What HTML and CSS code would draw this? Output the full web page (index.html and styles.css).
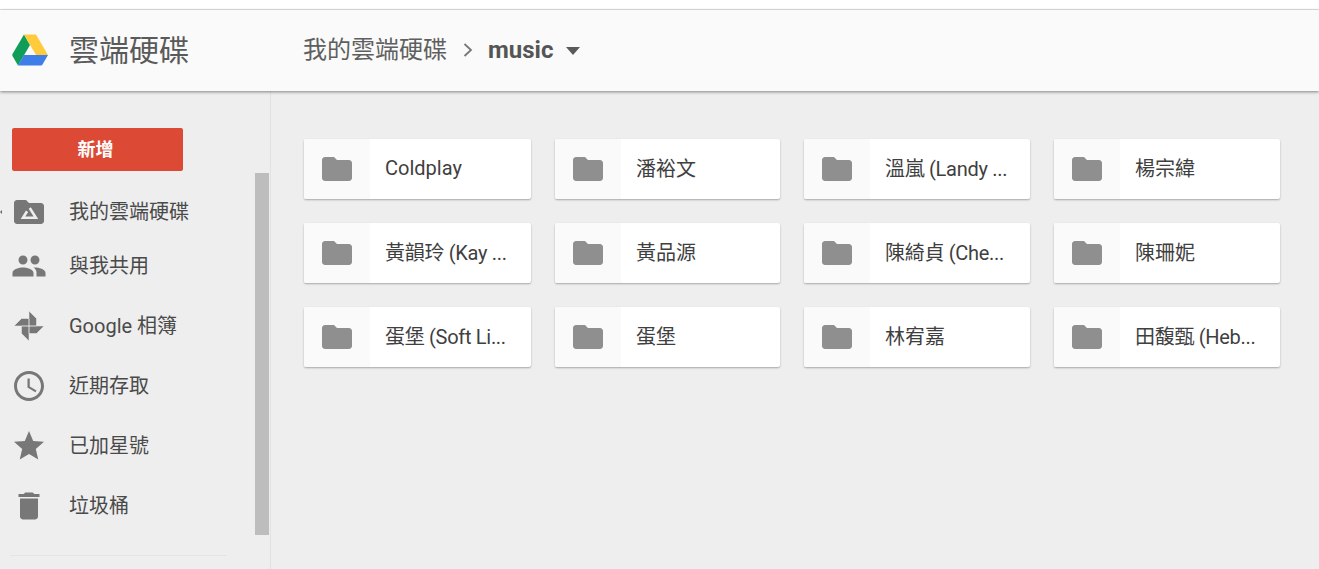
FILE: index.html
```html
<!DOCTYPE html>
<html lang="zh-Hant">
<head>
<meta charset="utf-8">
<title>雲端硬碟</title>
<link rel="stylesheet" href="styles.css">
</head>
<body>
<svg class="sprite" width="0" height="0" aria-hidden="true">
  <symbol id="folder" viewBox="0 0 24 24"><path d="M10 4H4c-1.100 0-2 .9-2 2v12c0 1.100.9 2 2 2h16c1.100 0 2-.9 2-2V8c0-1.100-.9-2-2-2h-8l-2-2z"/></symbol>
</svg>
<div class="topstrip"></div>
<header class="header">
  <div class="brand">
    <svg class="logo" viewBox="0 0 36 32" aria-hidden="true">
      <path fill="#0f9d58" d="M12 0.500 L0.500 20 Q0 21 0.500 22 L6 31.500 L18 11 Z"/>
      <path fill="#ffcb3d" d="M12 0.500 H24 L36 21 H24 Z"/>
      <path fill="#3f7ee8" d="M6 31.500 L12 21 H36 L30.500 30.500 Q30 31.500 29 31.500 Z"/>
    </svg>
    <span class="brand-name">雲端硬碟</span>
  </div>
  <nav class="crumbs">
    <span class="crumb">我的雲端硬碟</span>
    <svg class="crumb-sep" viewBox="0 0 12 16" aria-hidden="true"><path d="M2.500 2 L9 8 L2.500 14" fill="none" stroke="#777" stroke-width="1.800"/></svg>
    <span class="crumb-current">music</span>
    <span class="caret"></span>
  </nav>
</header>
<div class="body">
  <aside class="sidebar">
    <button class="new-btn">新增</button>
    <ul class="nav">
      <li class="nav-item nav-item-drive">
        <span class="tiny-arrow"></span>
        <svg class="nav-icon" viewBox="0 0 24 24" aria-hidden="true"><path d="M10 4H4c-1.100 0-2 .9-2 2v12c0 1.100.9 2 2 2h16c1.100 0 2-.9 2-2V8c0-1.100-.9-2-2-2h-8l-2-2z"/><path class="drive-mark" d="M12.500 9.300 L16.600 15.800 H8 L10.700 11.500"/></svg>
        <span class="nav-label">我的雲端硬碟</span>
      </li>
      <li class="nav-item nav-item-shared">
        <svg class="nav-icon" viewBox="0 0 24 24" aria-hidden="true"><path d="M16 11c1.660 0 2.990-1.340 2.990-3S17.660 5 16 5c-1.660 0-3 1.340-3 3s1.340 3 3 3zm-8 0c1.660 0 2.990-1.340 2.990-3S9.660 5 8 5C6.340 5 5 6.340 5 8s1.340 3 3 3zm0 2c-2.330 0-7 1.170-7 3.500V19h14v-2.500c0-2.330-4.670-3.500-7-3.500zm8 0c-.29 0-.62.020-.97.050 1.160.84 1.970 1.970 1.970 3.450V19h6v-2.500c0-2.330-4.670-3.500-7-3.500z"/></svg>
        <span class="nav-label">與我共用</span>
      </li>
      <li class="nav-item">
        <svg class="nav-icon" viewBox="0 0 24 24" aria-hidden="true"><path class="pinwheel" d="M12 12V2L17 7V12Z M12 12H22L17 17H12Z M12 12V22L7 17V12Z M12 12H2L7 7H12Z"/></svg>
        <span class="nav-label">Google 相簿</span>
      </li>
      <li class="nav-item">
        <svg class="nav-icon" viewBox="0 0 24 24" aria-hidden="true"><path d="M11.990 2C6.470 2 2 6.480 2 12s4.470 10 9.990 10C17.520 22 22 17.520 22 12S17.520 2 11.990 2zM12 20c-4.420 0-8-3.580-8-8s3.580-8 8-8 8 3.580 8 8-3.580 8-8 8zm.5-13H11v6l5.250 3.150.75-1.230-4.500-2.670z"/></svg>
        <span class="nav-label">近期存取</span>
      </li>
      <li class="nav-item">
        <svg class="nav-icon" viewBox="0 0 24 24" aria-hidden="true"><path d="M12 17.270L18.180 21l-1.640-7.030L22 9.240l-7.190-.61L12 2 9.190 8.630 2 9.240l5.460 4.730L5.820 21z"/></svg>
        <span class="nav-label">已加星號</span>
      </li>
      <li class="nav-item">
        <svg class="nav-icon" viewBox="0 0 24 24" aria-hidden="true"><path d="M6 19c0 1.100.9 2 2 2h8c1.100 0 2-.9 2-2V7H6v12zM19 4h-3.500l-1-1h-5l-1 1H5v2h14V4z"/></svg>
        <span class="nav-label">垃圾桶</span>
      </li>
    </ul>
    <div class="divider"></div>
    <div class="scroll-thumb"></div>
  </aside>
  <main class="main">
    <div class="grid">
      <div class="card"><div class="card-icon"><svg class="folder"><use href="#folder"/></svg></div><div class="card-name">Coldplay</div></div>
      <div class="card"><div class="card-icon"><svg class="folder"><use href="#folder"/></svg></div><div class="card-name">潘裕文</div></div>
      <div class="card"><div class="card-icon"><svg class="folder"><use href="#folder"/></svg></div><div class="card-name card-name-cut">溫嵐 (Landy ...</div></div>
      <div class="card"><div class="card-icon"><svg class="folder"><use href="#folder"/></svg></div><div class="card-name">楊宗緯</div></div>
      <div class="card"><div class="card-icon"><svg class="folder"><use href="#folder"/></svg></div><div class="card-name card-name-cut">黃韻玲 (Kay ...</div></div>
      <div class="card"><div class="card-icon"><svg class="folder"><use href="#folder"/></svg></div><div class="card-name">黃品源</div></div>
      <div class="card"><div class="card-icon"><svg class="folder"><use href="#folder"/></svg></div><div class="card-name card-name-cut">陳綺貞 (Che...</div></div>
      <div class="card"><div class="card-icon"><svg class="folder"><use href="#folder"/></svg></div><div class="card-name">陳珊妮</div></div>
      <div class="card"><div class="card-icon"><svg class="folder"><use href="#folder"/></svg></div><div class="card-name card-name-cut">蛋堡 (Soft Li...</div></div>
      <div class="card"><div class="card-icon"><svg class="folder"><use href="#folder"/></svg></div><div class="card-name">蛋堡</div></div>
      <div class="card"><div class="card-icon"><svg class="folder"><use href="#folder"/></svg></div><div class="card-name">林宥嘉</div></div>
      <div class="card"><div class="card-icon"><svg class="folder"><use href="#folder"/></svg></div><div class="card-name card-name-cut">田馥甄 (Heb...</div></div>
    </div>
  </main>
</div>
</body>
</html>
```
FILE: styles.css
```css
* { box-sizing: border-box; }
html, body { margin: 0; height: 569px; overflow: hidden; }
body {
  background: #eeeeee;
  color: #444;
  font-family: Roboto, "Noto Sans CJK TC", "Liberation Sans", sans-serif;
  display: flex;
  flex-direction: column;
}
.sprite { display: block; height: 0; }
.topstrip { background: #fff; border-bottom: 1px solid #e4e4e4; flex: none; height: 10px; }
.header {
  flex: none;
  height: 81px;
  background: #fafafa;
  box-shadow: 0 1px 3px rgba(0,0,0,.45);
  display: flex;
  align-items: center;
  position: relative;
  z-index: 2;
}
.brand { width: 303px; display: flex; align-items: center; padding-left: 12px; }
.logo { width: 36px; height: 32px; margin: 0 21px 2px 0; flex: none; }
.brand-name { font-size: 30px; color: #5a5a5a; font-weight: 400; line-height: 40px; }
.crumbs { display: flex; align-items: center; padding-bottom: 2px; }
.crumb { font-size: 24px; color: #5f5f5f; line-height: 32px; }
.crumb-sep { width: 12px; height: 16px; margin: 0 14px 0 15px; }
.crumb-current { font-size: 24px; font-weight: 700; color: #555; line-height: 32px; }
.caret {
  width: 0; height: 0;
  margin-left: 13px; margin-top: 2px;
  border-left: 7.500px solid transparent;
  border-right: 7.500px solid transparent;
  border-top: 8px solid #5a5a5a;
}
.body { flex: 1; display: flex; min-height: 0; }
.sidebar {
  width: 271px;
  flex: none;
  border-right: 1px solid #e2e2e2;
  padding: 37px 0 0 12px;
  position: relative;
}
.new-btn {
  display: block;
  width: 171px;
  height: 43px;
  background: #dc4a35;
  border: 0;
  border-radius: 2px;
  color: #fff;
  font: 700 18px "Noto Sans CJK TC", sans-serif;
  padding: 0 4px 4px 0;
}
.nav { list-style: none; margin: 0; padding: 0; }
.nav-item {
  height: 60px;
  display: flex;
  align-items: center;
  font-size: 20px;
  color: #4a4a4a;
  position: relative;
}
.nav-item-drive { height: 54px; margin-top: 14px; }
.nav-item-shared { height: 54px; margin-bottom: 3px; }
.nav-icon { width: 36px; height: 36px; fill: #777; margin: 0 22px 0 -1px; flex: none; }
.nav-label { padding-bottom: 3px; }
.drive-mark { fill: none; stroke: #eeeeee; stroke-width: 1.700; }
.pinwheel { stroke: #eeeeee; stroke-width: .35; }
.tiny-arrow {
  position: absolute;
  left: -12px; top: 25px;
  border-top: 2px solid transparent;
  border-bottom: 2px solid transparent;
  border-right: 2px solid #666;
}
.divider { height: 1px; background: #e4e4e4; width: 217px; margin: 19px 0 0 -2px; }
.scroll-thumb {
  position: absolute;
  left: 255px; top: 82px;
  width: 14px; height: 362px;
  background: #bdbdbd;
}
.main { flex: 1; padding: 48px 39px 0 33px; }
.grid { display: grid; grid-template-columns: 227px 225px 226px 226px; gap: 24px; }
.card {
  height: 60px;
  background: #fff;
  border-radius: 2px;
  box-shadow: 0 1px 2px rgba(0,0,0,.3);
  display: flex;
  align-items: center;
}
.card-icon {
  width: 66px;
  height: 100%;
  background: #fafafa;
  display: flex;
  align-items: center;
  justify-content: center;
  flex: none;
  border-radius: 2px 0 0 2px;
}
.folder { width: 36px; height: 36px; fill: #8f8f8f; }
.card-name { font-size: 20px; color: #3f3f3f; padding: 0 0 3px 15px; white-space: nowrap; }
.card-name-cut { letter-spacing: -.3px; }
```
